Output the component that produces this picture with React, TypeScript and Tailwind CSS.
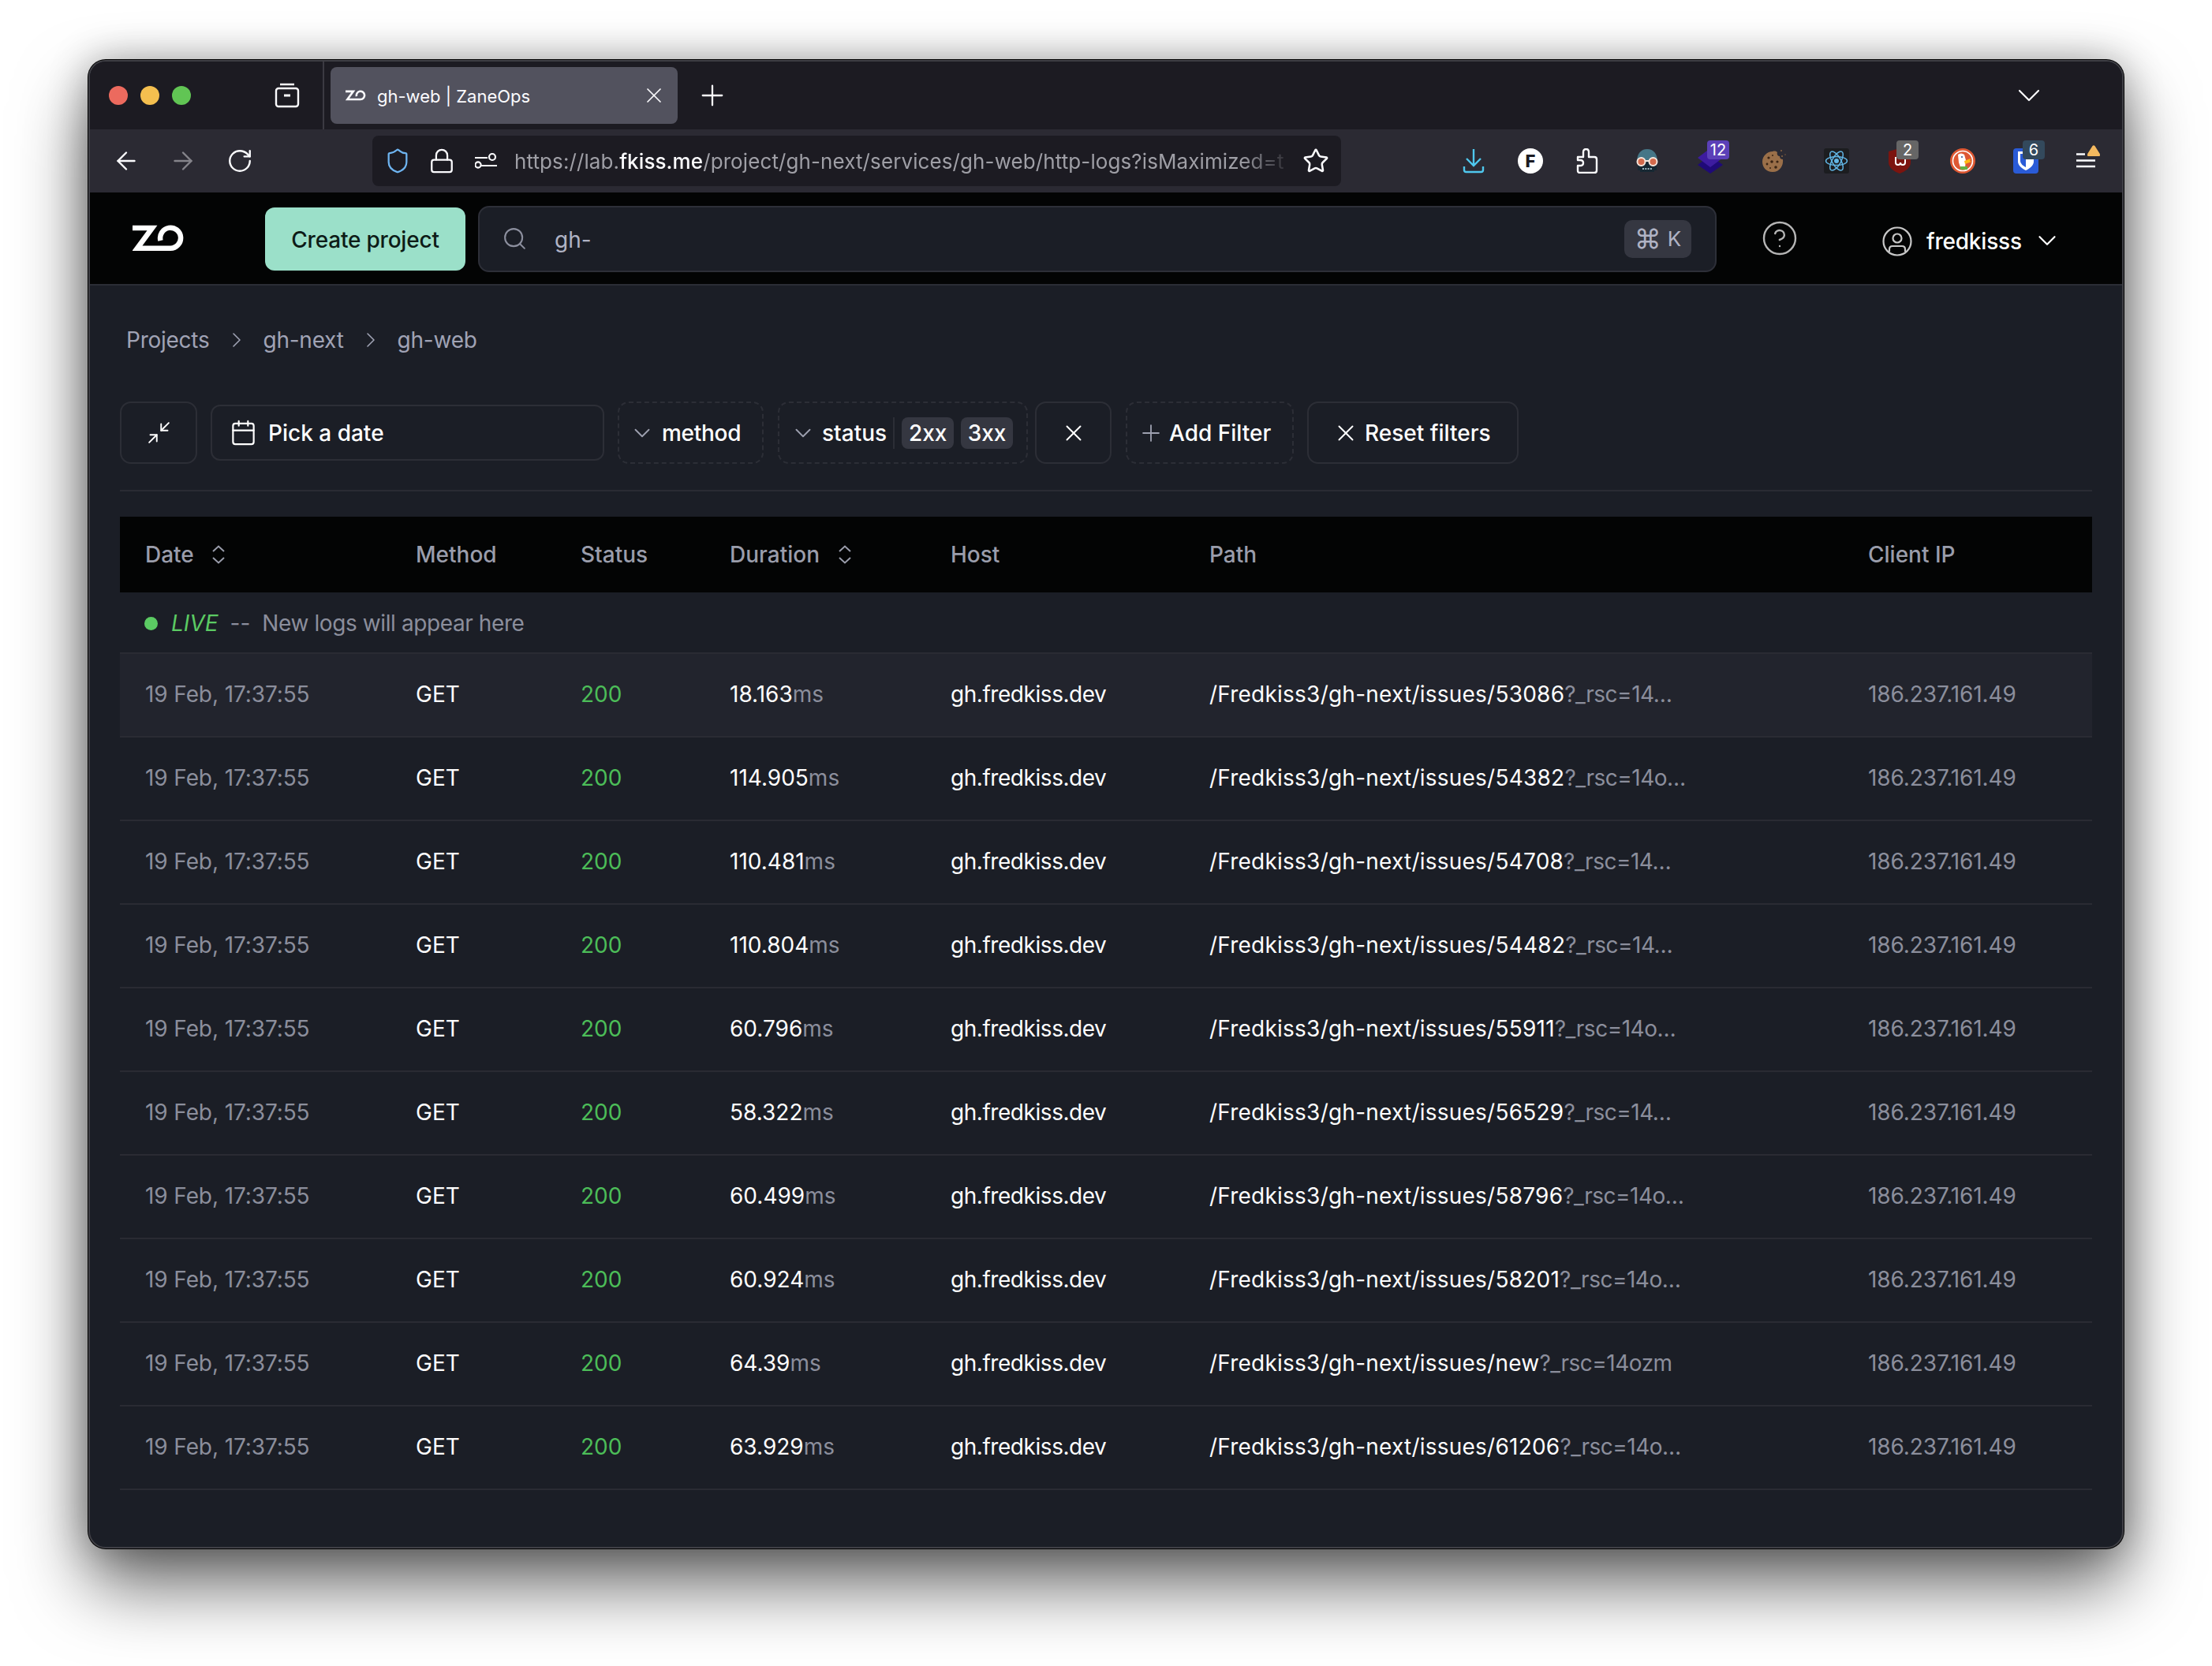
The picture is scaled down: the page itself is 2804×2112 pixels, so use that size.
import {
  ArrowLeft,
  ArrowRight,
  Calendar,
  ChevronDown,
  ChevronRight,
  CircleHelp,
  Lock,
  Minimize2,
  Plus,
  RotateCw,
  Search,
  Shield,
  Star,
  X,
} from "lucide-react";

const LOGS = [
  { ms: "18.163", issue: "53086", query: "?_rsc=14…" },
  { ms: "114.905", issue: "54382", query: "?_rsc=14o…" },
  { ms: "110.481", issue: "54708", query: "?_rsc=14…" },
  { ms: "110.804", issue: "54482", query: "?_rsc=14…" },
  { ms: "60.796", issue: "55911", query: "?_rsc=14o…" },
  { ms: "58.322", issue: "56529", query: "?_rsc=14…" },
  { ms: "60.499", issue: "58796", query: "?_rsc=14o…" },
  { ms: "60.924", issue: "58201", query: "?_rsc=14o…" },
  { ms: "64.39", issue: "new", query: "?_rsc=14ozm" },
  { ms: "63.929", issue: "61206", query: "?_rsc=14o…" },
];

const GRID = "grid grid-cols-[343px_209px_189px_280px_328px_835px_316px] items-center";

function ZaneLogo({ className }: { className?: string }) {
  return (
    <svg viewBox="0 0 66 34" className={className} fill="none" stroke="currentColor" strokeWidth="6.5">
      <path d="M0 4H25L6 29.7H48A13 13 0 1 0 35.5 20" />
    </svg>
  );
}

function SortIcon({ className }: { className?: string }) {
  return (
    <svg viewBox="0 0 18 24" className={`h-[24px] w-[18px] ${className}`} fill="none" stroke="currentColor" strokeWidth="2">
      <path d="M2 8L9 1.5L16 8M2 16L9 22.5L16 16" />
    </svg>
  );
}

function Badge({ children, className }: { children: string; className: string }) {
  return (
    <span
      className={`absolute top-[14px] left-[36px] flex h-[24px] w-[28px] items-center justify-center rounded-[4px] text-[20px] leading-none text-white ${className}`}
    >
      {children}
    </span>
  );
}

function DownloadIcon() {
  return (
    <svg viewBox="0 0 28 32" className="h-[32px] w-[28px]" fill="none" stroke="#4fc8ee" strokeWidth="2.4">
      <path d="M14 1V21M5 13L14 22L23 13M2 23V27.5Q2 30 4.5 30H23.5Q26 30 26 27.5V23" />
    </svg>
  );
}

function PuzzleIcon() {
  return (
    <svg viewBox="0 0 28 32" className="h-[32px] w-[28px]" fill="none" stroke="#fbfbfe" strokeWidth="2.4" strokeLinejoin="round">
      <path d="M2 11H9V5Q9 1 12.5 1Q16 1 16 5V11H23Q26 11 26 14V28Q26 31 23 31H5Q2 31 2 28V22H5Q9 22 9 18.5Q9 15 5 15H2Z" />
    </svg>
  );
}

function SkullIcon() {
  return (
    <svg viewBox="0 0 32 32" className="h-[32px] w-[32px]">
      <path d="M3 17C3 7 8 1 16 1S29 7 29 17Z" fill="#457687" />
      <path d="M4 17H28V28H25V30H7V28H4Z" fill="#172833" />
      <circle cx="8.5" cy="17" r="5" fill="#d46a4c" stroke="#f6e6dc" strokeWidth="2" />
      <circle cx="23.5" cy="17" r="5" fill="#d46a4c" stroke="#f6e6dc" strokeWidth="2" />
      <path d="M13 16H19" stroke="#f6e6dc" strokeWidth="2" />
      <path d="M10 26H22" stroke="#9fb8c0" strokeWidth="2" strokeDasharray="2 1.3" />
    </svg>
  );
}

function CookieIcon() {
  return (
    <svg viewBox="0 0 32 32" className="h-[32px] w-[32px]">
      <path d="M15 4C18 3 20 4 21 5C20 8 22 10 24 10C24 13 26 14 28 14C29 22 24 30 15 30C7 30 2 24 2 17C2 10 8 4 15 4Z" fill="#9a6f49" />
      <g fill="#3a2414">
        <circle cx="10" cy="12" r="1.6" />
        <circle cx="15" cy="9" r="1" />
        <circle cx="8" cy="20" r="1.4" />
        <circle cx="14" cy="17" r="1.8" />
        <circle cx="21" cy="17" r="1.6" />
        <circle cx="19" cy="24" r="1.8" />
        <circle cx="12" cy="25" r="1" />
      </g>
      <circle cx="26" cy="3" r="1" fill="#8d6744" />
      <circle cx="27" cy="10" r="1" fill="#8d6744" />
      <circle cx="31" cy="8" r="0.7" fill="#8d6744" />
    </svg>
  );
}

function ReactIcon() {
  return (
    <svg viewBox="0 0 32 32" className="h-[32px] w-[32px]">
      <rect width="32" height="32" rx="3" fill="#1c1d20" />
      <g fill="none" stroke="#61b5e4" strokeWidth="1.5">
        <ellipse cx="16" cy="16" rx="13.5" ry="5.5" />
        <ellipse cx="16" cy="16" rx="13.5" ry="5.5" transform="rotate(60 16 16)" />
        <ellipse cx="16" cy="16" rx="13.5" ry="5.5" transform="rotate(120 16 16)" />
      </g>
      <circle cx="16" cy="16" r="3" fill="#61b5e4" />
    </svg>
  );
}

function DuckIcon() {
  return (
    <svg viewBox="0 0 32 32" className="h-[32px] w-[32px]">
      <circle cx="16" cy="16" r="16" fill="#de5833" />
      <circle cx="16" cy="16" r="12.5" fill="none" stroke="#fff" strokeWidth="1.6" />
      <path d="M10 8Q14 5 18 8L20 15L19 24H13L11 18Z" fill="#fff" />
      <path d="M18 16L26 13L25 16L27 17L19 20Z" fill="#fdb913" />
      <path d="M13 23H22V27H13Z" fill="#65b145" />
      <circle cx="15" cy="11" r="1" fill="#2d4f8e" />
    </svg>
  );
}

function MenuIcon() {
  return (
    <svg viewBox="0 0 32 40" className="h-[40px] w-[32px]">
      <path d="M0 11.5H11M0 19.5H24M0 27H24" stroke="#fbfbfe" strokeWidth="2.4" />
      <path d="M14.5 14Q13.5 12 14.5 10.5L20.5 1Q22 -0.5 23.5 1L29.5 10.5Q30.5 12 29.5 14Z" fill="#f4b95f" />
    </svg>
  );
}

function BrowserChrome() {
  return (
    <>
      <div className="flex h-[86px] items-center bg-[#1c1b22] pl-[24px]">
        <div className="flex gap-[16px]">
          <span className="h-[24px] w-[24px] rounded-full bg-[#ec6a5e]" />
          <span className="h-[24px] w-[24px] rounded-full bg-[#f4bf4f]" />
          <span className="h-[24px] w-[24px] rounded-full bg-[#61c554]" />
        </div>
        <svg viewBox="0 0 32 32" className="ml-[106px] h-[32px] w-[32px]" fill="none" stroke="#fbfbfe" strokeWidth="2.4">
          <path d="M7 2H25" />
          <rect x="2" y="7" width="28" height="23" rx="3" />
          <path d="M12 16H20" strokeWidth="3" />
        </svg>
        <div className="ml-[29px] h-full w-[2px] self-stretch bg-[#3b3a42]" />
        <div className="ml-[8px] flex h-[72px] w-[440px] items-center rounded-[8px] bg-[#52525e] pl-[19px] pr-[14px] text-[22px] text-[#fbfbfe]">
          <ZaneLogo className="h-[14px] w-[26px]" />
          <span className="ml-[14px] mt-[2px]">gh-web | ZaneOps</span>
          <X className="ml-auto h-[32px] w-[32px]" strokeWidth={1.3} />
        </div>
        <Plus className="ml-[23px] h-[42px] w-[42px] text-[#fbfbfe]" strokeWidth={1.3} />
        <ChevronDown className="ml-auto mr-[94px] h-[48px] w-[48px] text-[#fbfbfe]" strokeWidth={1.1} />
      </div>

      <div className="flex h-[80px] items-center bg-[#2b2a33] pl-[10px] pr-[2px]">
        <span className="flex w-[72px] justify-center">
          <ArrowLeft className="h-[36px] w-[36px] text-[#fbfbfe]" strokeWidth={1.6} />
        </span>
        <span className="flex w-[72px] justify-center">
          <ArrowRight className="h-[36px] w-[36px] text-[#85848b]" strokeWidth={1.6} />
        </span>
        <span className="flex w-[72px] justify-center">
          <RotateCw className="h-[34px] w-[34px] text-[#fbfbfe]" strokeWidth={1.7} />
        </span>
        <div className="ml-[132px] flex h-[64px] w-[1228px] items-center rounded-[8px] bg-[#1c1b22] text-[#fbfbfe]">
          <span className="flex w-[64px] justify-center">
            <Shield className="h-[34px] w-[34px] text-[#6eb4f0]" strokeWidth={1.6} />
          </span>
          <span className="flex w-[48px] justify-center">
            <Lock className="h-[34px] w-[34px]" strokeWidth={1.6} />
          </span>
          <svg viewBox="0 0 28 24" className="ml-[18px] h-[24px] w-[28px]" fill="none" stroke="#fbfbfe" strokeWidth="2.2">
            <path d="M0 8H16M8 18H28" />
            <circle cx="22" cy="7" r="4" />
            <circle cx="4" cy="17" r="3.6" />
          </svg>
          <div className="ml-[22px] w-[989px] whitespace-nowrap text-[26px] tracking-[0.1px] text-[#9f9fa6] [mask-image:linear-gradient(to_right,black_93%,transparent)]">
            https://lab.<span className="font-medium text-[#fbfbfe]">fkiss.me</span>/project/gh-next/services/gh-web/http-logs?isMaximized=t
          </div>
          <Star className="ml-[10px] h-[34px] w-[34px]" strokeWidth={1.8} />
        </div>
        <div className="ml-auto flex items-center">
          <span className="flex w-[72px] justify-center"><DownloadIcon /></span>
          <span className="flex w-[72px] justify-center">
            <span className="flex h-[32px] w-[32px] items-center justify-center rounded-full bg-white text-[22px] font-extrabold text-[#1c1b22]">F</span>
          </span>
          <span className="flex w-[72px] justify-center"><PuzzleIcon /></span>
          <span className="flex w-[80px] justify-center"><SkullIcon /></span>
          <span className="relative flex h-[80px] w-[80px] items-center justify-center">
            <svg viewBox="0 0 32 32" className="h-[32px] w-[32px]">
              <path d="M16 9L32 21L16 32L0 21Z" fill="#1f0a78" />
              <path d="M16 0L32 12L16 24L0 12Z" fill="#3d1ca0" />
            </svg>
            <Badge className="bg-[#5b40b8]">12</Badge>
          </span>
          <span className="flex w-[80px] justify-center"><CookieIcon /></span>
          <span className="flex w-[80px] justify-center"><ReactIcon /></span>
          <span className="relative flex h-[80px] w-[80px] items-center justify-center">
            <svg viewBox="0 0 28 32" className="h-[32px] w-[28px]">
              <path d="M0 4L14 0L28 4V18C28 25 20 30 14 32C8 30 0 25 0 18Z" fill="#7c140f" />
              <path d="M9 11V18Q9 21 12 21Q15 21 15 18Q15 21 18 21Q21 21 21 18V11" fill="none" stroke="#fff" strokeWidth="2" />
            </svg>
            <Badge className="bg-[#666666]">2</Badge>
          </span>
          <span className="flex w-[80px] justify-center"><DuckIcon /></span>
          <span className="relative flex h-[80px] w-[80px] items-center justify-center">
            <svg viewBox="0 0 32 32" className="h-[32px] w-[32px]">
              <rect width="32" height="32" rx="4" fill="#2a5bd7" />
              <path d="M6 4H26V17C26 22 20 26 16 28C12 26 6 22 6 17Z" fill="#fff" />
              <path d="M9 7H16V24C12 22 9 19 9 16Z" fill="#2a5bd7" />
            </svg>
            <Badge className="bg-[#33495c]">6</Badge>
          </span>
          <span className="flex w-[80px] justify-center"><MenuIcon /></span>
        </div>
      </div>
    </>
  );
}

function AppHeader() {
  return (
    <header className="flex h-[118px] items-center border-b-2 border-[#2b2d35] bg-[#030404] pl-[54px]">
      <ZaneLogo className="h-[34px] w-[66px] text-white" />
      <button className="ml-[102px] mt-[1px] h-[80px] w-[254px] rounded-[12px] bg-[#9be0c9] pt-[2px] text-[28px] font-medium tracking-[-0.2px] text-[#0d1c17]">
        Create project
      </button>
      <div className="ml-[16px] mt-[1px] flex h-[84px] w-[1570px] items-center rounded-[14px] border-2 border-[#2d2f38] bg-[#1b1e26] pl-[28px] pr-[30px]">
        <Search className="h-[33px] w-[33px] text-[#8c8f9e]" strokeWidth={1.5} />
        <span className="ml-[34px] mt-[2px] text-[28px] text-[#b0b3c4]">gh-</span>
        <kbd className="ml-auto flex h-[48px] w-[85px] items-center justify-center gap-[8px] rounded-[10px] bg-[#353741] text-[26px] text-[#b0b3c4] [font-family:Inter,sans-serif]">
          <span className="text-[34px] leading-none">⌘</span>
          <span>K</span>
        </kbd>
      </div>
      <CircleHelp className="ml-[56px] h-[48px] w-[48px] text-[#b5b5b5]" strokeWidth={1.2} />
      <svg viewBox="0 0 38 38" className="ml-[106px] mt-[7px] h-[38px] w-[38px]" fill="none" stroke="#c8c8c8" strokeWidth="2.2">
        <circle cx="19" cy="19" r="17.5" />
        <circle cx="19" cy="15" r="5.5" />
        <path d="M9 32V29Q9 25 13 25H25Q29 25 29 29V32" />
      </svg>
      <span className="ml-[18px] mt-[7px] text-[28px] font-medium tracking-[-0.2px] text-white">fredkisss</span>
      <ChevronDown className="ml-[13px] mt-[5px] h-[38px] w-[38px] text-white" strokeWidth={1.4} />
    </header>
  );
}

function FilterBar() {
  const solid = "flex h-[79px] items-center justify-center rounded-[14px] border-2 border-[#2c2e36]";
  const dashed = "flex h-[79px] items-center rounded-[14px] border-2 border-dashed border-[#2c2e36]";
  return (
    <div className="mt-[58px] flex items-center text-[28px] font-medium text-white">
      <button className={`${solid} w-[98px]`}>
        <Minimize2 className="h-[33px] w-[33px]" strokeWidth={1.4} />
      </button>
      <div className="ml-[17px] flex h-[71px] w-[499px] items-center rounded-[12px] border-2 border-[#2c2e36] pl-[22px]">
        <Calendar className="h-[35px] w-[35px]" strokeWidth={1.5} />
        <span className="ml-[14px]">Pick a date</span>
      </div>
      <div className={`${dashed} ml-[17px] w-[185px] pl-[12px]`}>
        <ChevronDown className="h-[34px] w-[34px] text-[#9ea1b0]" strokeWidth={1.3} />
        <span className="ml-[8px] tracking-[-0.3px]">method</span>
      </div>
      <div className={`${dashed} ml-[18px] w-[317px] pl-[13px]`}>
        <ChevronDown className="h-[34px] w-[34px] text-[#9ea1b0]" strokeWidth={1.3} />
        <span className="ml-[7px]">status</span>
        <span className="ml-[8px] h-[40px] w-[2px] bg-[#2c2e36]" />
        <span className="ml-[9px] flex h-[40px] w-[66px] items-center justify-center rounded-[8px] bg-[#353741]">2xx</span>
        <span className="ml-[9px] flex h-[40px] w-[66px] items-center justify-center rounded-[8px] bg-[#353741]">3xx</span>
      </div>
      <button className={`${solid} ml-[9px] w-[97px]`}>
        <X className="h-[34px] w-[34px]" strokeWidth={1.4} />
      </button>
      <div className={`${dashed} ml-[18px] w-[213px] pl-[13px]`}>
        <Plus className="h-[34px] w-[34px] text-[#9ea1b0]" strokeWidth={1.3} />
        <span className="ml-[6px]">Add Filter</span>
      </div>
      <button className={`${solid} ml-[17px] w-[268px] justify-start pl-[30px]`}>
        <X className="h-[34px] w-[34px]" strokeWidth={1.4} />
        <span className="ml-[7px]">Reset filters</span>
      </button>
    </div>
  );
}

function LogTable() {
  return (
    <div className="mt-[32px] text-[28px]">
      <div className={`${GRID} h-[96px] bg-[#030404] font-medium text-[#9a9dab]`}>
        <div className="flex items-center pl-[32px]">
          Date
          <SortIcon className="ml-[22px]" />
        </div>
        <div className="pl-[32px]">Method</div>
        <div className="pl-[32px]">Status</div>
        <div className="flex items-center pl-[32px]">
          Duration
          <SortIcon className="ml-[23px]" />
        </div>
        <div className="pl-[32px]">Host</div>
        <div className="pl-[32px]">Path</div>
        <div className="pl-[32px]">Client IP</div>
      </div>
      <div className="flex h-[78px] items-center border-b-2 border-[#2a2b33] pl-[31px] pt-[2px] text-[#8b8e9c]">
        <span className="h-[17px] w-[17px] rounded-full bg-[#5bcb63]" />
        <em className="ml-[17px] text-[#5bcb63]">LIVE</em>
        <span className="ml-[15px]">--</span>
        <span className="ml-[15px] tracking-[-0.4px]">New logs will appear here</span>
      </div>
      {LOGS.map((log, i) => (
        <div key={i} className={`${GRID} h-[106px] border-b-2 border-[#2a2b33] pb-[2px] ${i === 0 ? "bg-[#22242d]" : ""}`}>
          <div className="pl-[32px] tracking-[-0.1px] text-[#8b8e9c]">19 Feb, 17:37:55</div>
          <div className="pl-[32px] text-white">GET</div>
          <div className="pl-[32px] text-[#4cbd58]">200</div>
          <div className="pl-[32px] text-white">
            {log.ms}
            <span className="text-[#8b8e9c]">ms</span>
          </div>
          <div className="pl-[32px] tracking-[-0.45px] text-white">gh.fredkiss.dev</div>
          <div className="pl-[32px] whitespace-nowrap tracking-[0.23px] text-white">
            /Fredkiss3/gh-next/issues/{log.issue}
            <span className="tracking-[-0.5px] text-[#8b8e9c]">{log.query}</span>
          </div>
          <div className="pl-[32px] tracking-[-0.1px] text-[#8b8e9c]">186.237.161.49</div>
        </div>
      ))}
    </div>
  );
}

export default function App() {
  return (
    <div className="h-[2112px] w-[2804px] overflow-hidden bg-white pl-[112px] pt-[76px] [font-family:Inter,sans-serif]">
      <div className="h-[1887px] w-[2580px] overflow-hidden rounded-[22px] border-2 border-[#404046] bg-[#1b1e26] shadow-[0_0_0_1px_#000,0_46px_90px_rgba(0,0,0,0.6),0_0_50px_rgba(0,0,0,0.3)]">
        <BrowserChrome />
        <AppHeader />
        <main className="px-[38px]">
          <nav className="ml-[8px] mt-[49px] flex h-[40px] items-center text-[28px] tracking-[-0.25px] text-[#a0a3b5]">
            <span>Projects</span>
            <ChevronRight className="mx-[18px] h-[32px] w-[32px]" strokeWidth={1.2} />
            <span>gh-next</span>
            <ChevronRight className="mx-[18px] h-[32px] w-[32px]" strokeWidth={1.2} />
            <span>gh-web</span>
          </nav>
          <FilterBar />
          <div className="mt-[33px] h-[2px] bg-[#2a2b33]" />
          <LogTable />
        </main>
      </div>
    </div>
  );
}
